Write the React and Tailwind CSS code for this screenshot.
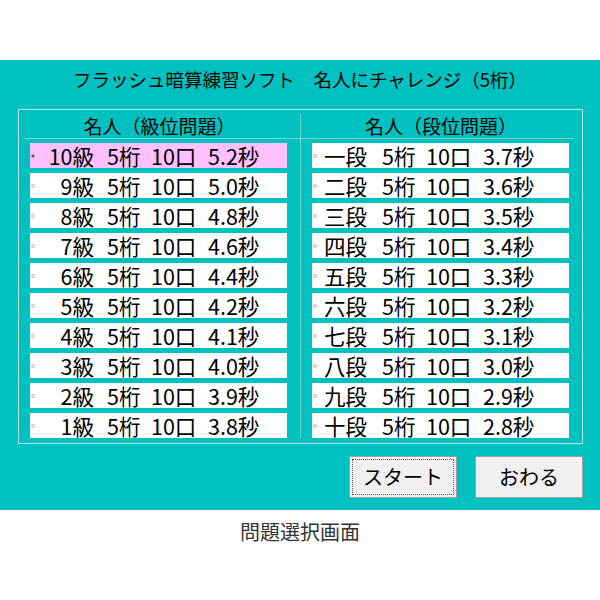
import React from "react";

const kyuRows = [
  { grade: "10級", time: "5.2秒", selected: true },
  { grade: "9級", time: "5.0秒" },
  { grade: "8級", time: "4.8秒" },
  { grade: "7級", time: "4.6秒" },
  { grade: "6級", time: "4.4秒" },
  { grade: "5級", time: "4.2秒" },
  { grade: "4級", time: "4.1秒" },
  { grade: "3級", time: "4.0秒" },
  { grade: "2級", time: "3.9秒" },
  { grade: "1級", time: "3.8秒" },
];

const danRows = [
  { grade: "一段", time: "3.7秒" },
  { grade: "二段", time: "3.6秒" },
  { grade: "三段", time: "3.5秒" },
  { grade: "四段", time: "3.4秒" },
  { grade: "五段", time: "3.3秒" },
  { grade: "六段", time: "3.2秒" },
  { grade: "七段", time: "3.1秒" },
  { grade: "八段", time: "3.0秒" },
  { grade: "九段", time: "2.9秒" },
  { grade: "十段", time: "2.8秒" },
];

function Radio({ checked }) {
  return (
    <span
      className={`ml-[1px] w-[4px] h-[4px] rounded-full border shrink-0 ${
        checked ? "bg-[#555] border-[#999]" : "bg-white border-[#bbb]"
      }`}
    />
  );
}

function Row({ grade, time, selected, kyu }) {
  return (
    <div
      className={`flex items-center h-[25px] w-[257px] ml-[11px] text-[21.5px] leading-none text-black whitespace-nowrap ${
        selected ? "bg-[#ffc0ff]" : "bg-white"
      }`}
    >
      <Radio checked={selected} />
      {kyu ? (
        <span className="w-[59px] text-right">{grade}</span>
      ) : (
        <span className="ml-[7px] w-[58px]">{grade}</span>
      )}
      <span className={`${kyu ? "ml-[13px]" : ""} w-[44px]`}>5桁</span>
      <span className="w-[57px]">10口</span>
      <span>{time}</span>
    </div>
  );
}

function Column({ title, rows, kyu }) {
  return (
    <div className={`flex flex-col w-[281px] ${kyu ? "" : "border-l border-[#6fd6d6]"}`}>
      <div className="h-[24px] flex items-center justify-center text-[19px] text-black">
        {title}
      </div>
      <div className={`h-px bg-[#6fd6d6] ${kyu ? "ml-[5px]" : "mr-[7px]"}`} />
      <div className="flex flex-col gap-[5px] mt-[4px]">
        {rows.map((r) => (
          <Row key={r.grade} {...r} kyu={kyu} />
        ))}
      </div>
    </div>
  );
}

export default function App() {
  return (
    <div
      className="w-[600px] h-[600px] bg-white pt-[60px]"
      style={{ fontFamily: '"Noto Sans CJK JP", sans-serif' }}
    >
      <div className="h-[450px] bg-[#00c0c0] flex flex-col">
        <div className="h-[40px] flex items-center justify-center text-[18.5px] text-black">
          フラッシュ暗算練習ソフト　名人にチャレンジ（5桁）
        </div>
        <div className="mt-[9px] ml-[18px] w-[565px] h-[335px] border border-[#b4e6e6] pt-[4px]">
          <div className="flex">
            <Column title="名人（級位問題）" rows={kyuRows} kyu />
            <Column title="名人（段位問題）" rows={danRows} />
          </div>
        </div>
        <div className="flex justify-end gap-[18px] pr-[17px] mt-[12px]">
          <button className="w-[108px] h-[42px] bg-[#f0f0f0] border border-[#a0a0a0] text-[20px] text-black outline-1 outline-dotted outline-[#555] outline-offset-[-4px]">
            スタート
          </button>
          <button className="w-[108px] h-[42px] bg-[#f0f0f0] border border-[#a0a0a0] text-[20px] text-black">
            おわる
          </button>
        </div>
      </div>
      <div className="h-[44px] flex items-center justify-center text-[20px] text-[#333]">
        問題選択画面
      </div>
    </div>
  );
}
